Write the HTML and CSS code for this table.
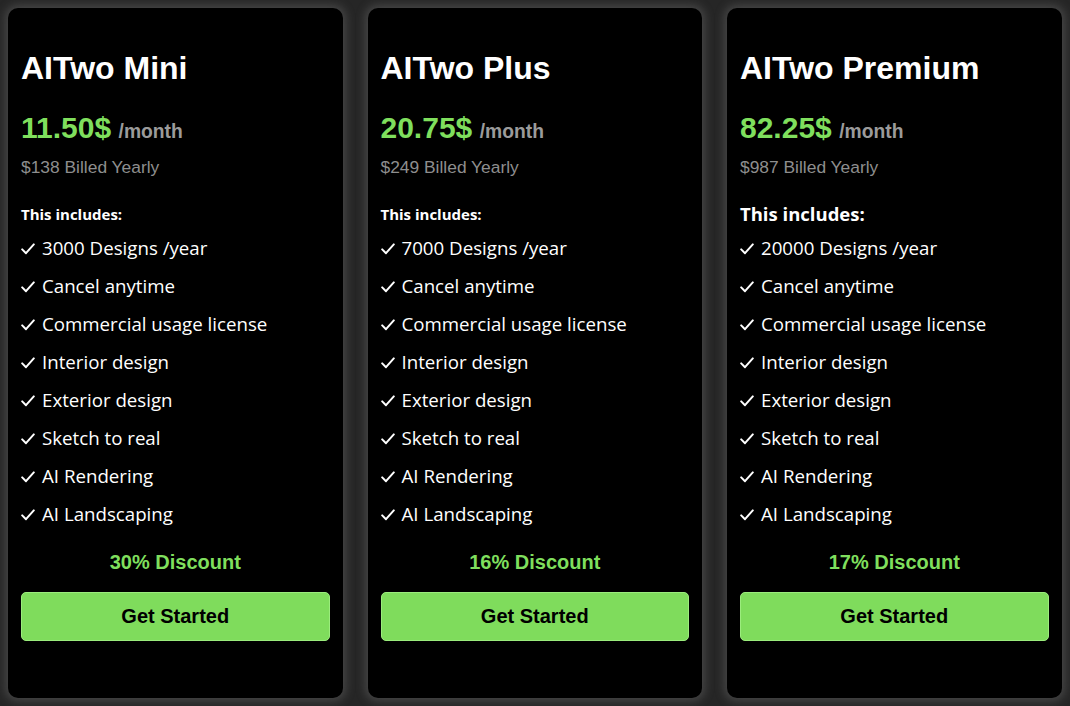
FILE: index.html
```html
<!DOCTYPE html>
<html lang="en">
<head>
<meta charset="utf-8">
<title>AITwo Pricing</title>
<link rel="stylesheet" href="styles.css">
</head>
<body>
<main class="plans">
  <section class="card">
    <h2 class="title">AITwo Mini</h2>
    <p class="price"><span class="amount">11.50$</span> <span class="per">/month</span></p>
    <p class="billed">$138 Billed Yearly</p>
    <h3 class="includes">This includes:</h3>
    <ul class="features">
      <li><svg class="check" viewBox="0 0 14 12"><path d="M1.2 6.4 L5 10.2 L12.8 1.4"/></svg>3000 Designs /year</li>
      <li><svg class="check" viewBox="0 0 14 12"><path d="M1.2 6.4 L5 10.2 L12.8 1.4"/></svg>Cancel anytime</li>
      <li><svg class="check" viewBox="0 0 14 12"><path d="M1.2 6.4 L5 10.2 L12.8 1.4"/></svg>Commercial usage license</li>
      <li><svg class="check" viewBox="0 0 14 12"><path d="M1.2 6.4 L5 10.2 L12.8 1.4"/></svg>Interior design</li>
      <li><svg class="check" viewBox="0 0 14 12"><path d="M1.2 6.4 L5 10.2 L12.8 1.4"/></svg>Exterior design</li>
      <li><svg class="check" viewBox="0 0 14 12"><path d="M1.2 6.4 L5 10.2 L12.8 1.4"/></svg>Sketch to real</li>
      <li><svg class="check" viewBox="0 0 14 12"><path d="M1.2 6.4 L5 10.2 L12.8 1.4"/></svg>AI Rendering</li>
      <li><svg class="check" viewBox="0 0 14 12"><path d="M1.2 6.4 L5 10.2 L12.8 1.4"/></svg>AI Landscaping</li>
    </ul>
    <p class="discount">30% Discount</p>
    <button class="cta">Get Started</button>
  </section>
  <section class="card">
    <h2 class="title">AITwo Plus</h2>
    <p class="price"><span class="amount">20.75$</span> <span class="per">/month</span></p>
    <p class="billed">$249 Billed Yearly</p>
    <h3 class="includes">This includes:</h3>
    <ul class="features">
      <li><svg class="check" viewBox="0 0 14 12"><path d="M1.2 6.4 L5 10.2 L12.8 1.4"/></svg>7000 Designs /year</li>
      <li><svg class="check" viewBox="0 0 14 12"><path d="M1.2 6.4 L5 10.2 L12.8 1.4"/></svg>Cancel anytime</li>
      <li><svg class="check" viewBox="0 0 14 12"><path d="M1.2 6.4 L5 10.2 L12.8 1.4"/></svg>Commercial usage license</li>
      <li><svg class="check" viewBox="0 0 14 12"><path d="M1.2 6.4 L5 10.2 L12.8 1.4"/></svg>Interior design</li>
      <li><svg class="check" viewBox="0 0 14 12"><path d="M1.2 6.4 L5 10.2 L12.8 1.4"/></svg>Exterior design</li>
      <li><svg class="check" viewBox="0 0 14 12"><path d="M1.2 6.4 L5 10.2 L12.8 1.4"/></svg>Sketch to real</li>
      <li><svg class="check" viewBox="0 0 14 12"><path d="M1.2 6.4 L5 10.2 L12.8 1.4"/></svg>AI Rendering</li>
      <li><svg class="check" viewBox="0 0 14 12"><path d="M1.2 6.4 L5 10.2 L12.8 1.4"/></svg>AI Landscaping</li>
    </ul>
    <p class="discount">16% Discount</p>
    <button class="cta">Get Started</button>
  </section>
  <section class="card">
    <h2 class="title">AITwo Premium</h2>
    <p class="price"><span class="amount">82.25$</span> <span class="per">/month</span></p>
    <p class="billed">$987 Billed Yearly</p>
    <h3 class="includes includes-lg">This includes:</h3>
    <ul class="features">
      <li><svg class="check" viewBox="0 0 14 12"><path d="M1.2 6.4 L5 10.2 L12.8 1.4"/></svg>20000 Designs /year</li>
      <li><svg class="check" viewBox="0 0 14 12"><path d="M1.2 6.4 L5 10.2 L12.8 1.4"/></svg>Cancel anytime</li>
      <li><svg class="check" viewBox="0 0 14 12"><path d="M1.2 6.4 L5 10.2 L12.8 1.4"/></svg>Commercial usage license</li>
      <li><svg class="check" viewBox="0 0 14 12"><path d="M1.2 6.4 L5 10.2 L12.8 1.4"/></svg>Interior design</li>
      <li><svg class="check" viewBox="0 0 14 12"><path d="M1.2 6.4 L5 10.2 L12.8 1.4"/></svg>Exterior design</li>
      <li><svg class="check" viewBox="0 0 14 12"><path d="M1.2 6.4 L5 10.2 L12.8 1.4"/></svg>Sketch to real</li>
      <li><svg class="check" viewBox="0 0 14 12"><path d="M1.2 6.4 L5 10.2 L12.8 1.4"/></svg>AI Rendering</li>
      <li><svg class="check" viewBox="0 0 14 12"><path d="M1.2 6.4 L5 10.2 L12.8 1.4"/></svg>AI Landscaping</li>
    </ul>
    <p class="discount">17% Discount</p>
    <button class="cta">Get Started</button>
  </section>
</main>
</body>
</html>
```
FILE: styles.css
```css
* { box-sizing: border-box; }

html, body {
  margin: 0;
  padding: 0;
  background: #262626;
  height: 100%;
}

body {
  font-family: "Liberation Sans", Arial, sans-serif;
  color: #fff;
  overflow: hidden;
}

.plans {
  display: flex;
  gap: 25px;
  padding: 8px 8px 8px 8px;
}

.card {
  flex: 0 0 334.5px;
  height: 690px;
  background: #000;
  border-radius: 10px;
  box-shadow: 0 0 10px 3px rgba(110, 110, 110, 0.45);
  padding: 0 13px;
  display: flex;
  flex-direction: column;
}

.title {
  margin: 42px 0 0;
  font-size: 32px;
  line-height: 37px;
  font-weight: bold;
  color: #fff;
}

.price {
  margin: 24px 0 0;
  line-height: 34px;
  font-weight: bold;
}

.amount {
  font-size: 30px;
  color: #7fdf5d;
}

.per {
  font-size: 19.3px;
  color: #9b9b9b;
  margin-left: 3px;
}

.billed {
  margin: 7px 0 0;
  font-size: 17.4px;
  line-height: 20px;
  color: #8e8e8e;
}

.includes {
  margin: 27px 0 0;
  font-family: "Open Sans", "Noto Sans", sans-serif;
  font-size: 15px;
  line-height: 20px;
  font-weight: bold;
}

.includes-lg {
  font-size: 18.5px;
}

.features {
  list-style: none;
  margin: 5px 0 0;
  padding: 0;
  font-family: "Open Sans", "Noto Sans", sans-serif;
  font-size: 18.7px;
  line-height: 38px;
}

.features li {
  display: flex;
  align-items: center;
  gap: 7px;
  white-space: nowrap;
}

.check {
  width: 14px;
  height: 12px;
  flex: 0 0 14px;
  margin-top: 1px;
}

.check path {
  fill: none;
  stroke: #fff;
  stroke-width: 2;
  stroke-linecap: round;
  stroke-linejoin: round;
}

.discount {
  margin: 18px 0 0;
  text-align: center;
  font-size: 20px;
  line-height: 23px;
  font-weight: bold;
  color: #7fdf5d;
}

.cta {
  margin-top: 18px;
  height: 49px;
  width: 100%;
  border: 1px solid #9bec7d;
  border-radius: 5px;
  background: #7fdc5c;
  color: #000;
  font-family: "Liberation Sans", Arial, sans-serif;
  font-size: 20px;
  font-weight: bold;
  cursor: pointer;
}
```
